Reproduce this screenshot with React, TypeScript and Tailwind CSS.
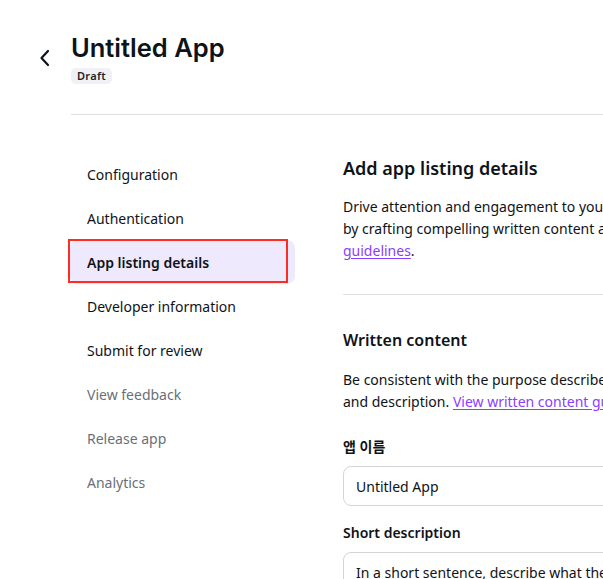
import React from "react";

const navItems: { label: string; state: "normal" | "active" | "muted" }[] = [
  { label: "Configuration", state: "normal" },
  { label: "Authentication", state: "normal" },
  { label: "App listing details", state: "active" },
  { label: "Developer information", state: "normal" },
  { label: "Submit for review", state: "normal" },
  { label: "View feedback", state: "muted" },
  { label: "Release app", state: "muted" },
  { label: "Analytics", state: "muted" },
];

export default function App() {
  return (
    <div
      className="w-[603px] h-[579px] overflow-hidden bg-white text-[#0e1318]"
      style={{ fontFamily: '"Noto Sans", "Noto Sans CJK KR", sans-serif' }}
    >
      {/* Header */}
      <div className="flex pl-[38px] pt-[32px]">
        <div className="w-[33px] pt-[17px]">
          <svg width="16" height="18" viewBox="0 0 16 18" fill="none">
            <path d="M10 2 L3.5 9 L10 16" stroke="#0e1318" strokeWidth="2.2" strokeLinecap="round" strokeLinejoin="round" />
          </svg>
        </div>
        <div className="flex flex-col items-start">
          <h1 className="text-[24px] leading-[32px] font-semibold" style={{ fontFamily: 'Inter, "Noto Sans", sans-serif', fontSize: "25.5px" }}>
            Untitled App
          </h1>
          <span className="mt-[4px] rounded-[5px] bg-[#f0f1f4] px-[6px] text-[11px] leading-[16px] font-semibold tracking-[0.3px] text-[#1f2328]">
            Draft
          </span>
        </div>
      </div>
      <div className="ml-[71px] mt-[30px] border-t border-[#dedfe3] w-[700px]" />

      {/* Body */}
      <div className="flex pl-[70px] pt-[37px]">
        <nav className="w-[225px] shrink-0 flex flex-col">
          {navItems.map((item) => (
            <div
              key={item.label}
              className={
                item.state === "active"
                  ? "relative h-[44px] flex items-center px-[17px] rounded-[8px] bg-[#eee9fd] text-[14px] font-semibold text-[#0e1318]"
                  : item.state === "muted"
                  ? "h-[44px] flex items-center px-[17px] text-[14px] text-[#6a6f77]"
                  : "h-[44px] flex items-center px-[17px] text-[14px] text-[#0e1318]"
              }
            >
              {item.label}
              {item.state === "active" && (
                <div className="absolute left-[-2px] top-[-1px] w-[220px] h-[44px] border-2 border-[#ff2d20]" />
              )}
            </div>
          ))}
        </nav>

        <main className="ml-[48px] w-[520px] shrink-0 pt-[2px]">
          <h2 className="text-[18px] leading-[28px] font-semibold">Add app listing details</h2>
          <p className="mt-[14px] text-[14px] leading-[22px] whitespace-nowrap text-[#0e1318]">
            Drive attention and engagement to your app in the marketplace
            <br />
            by crafting compelling written content and visuals. Follow our
            <br />
            <a className="text-[#8b3dff] underline underline-offset-2">guidelines</a>.
          </p>
          <div className="mt-[32px] border-t border-[#dedfe3]" />
          <h3 className="mt-[33px] text-[16px] leading-[24px] font-semibold">Written content</h3>
          <p className="mt-[17px] text-[14px] leading-[22px] whitespace-nowrap">
            Be consistent with the purpose described in your app name
            <br />
            and description.{" "}
            <a className="text-[#8b3dff] underline underline-offset-2">View written content guidelines</a>
          </p>
          <label className="block mt-[24px] text-[14px] leading-[20px] font-semibold">앱 이름</label>
          <div className="mt-[9px] h-[40px] rounded-[8px] border border-[#d3d5d9] flex items-center px-[12px] text-[14px]">
            Untitled App
          </div>
          <label className="block mt-[17px] text-[14px] leading-[20px] font-semibold">Short description</label>
          <div className="mt-[9px] h-[80px] rounded-[8px] border border-[#d3d5d9] px-[12px] pt-[9px] text-[14px] leading-[22px] text-[#0e1318] whitespace-nowrap">
            In a short sentence, describe what the app does
          </div>
        </main>
      </div>
    </div>
  );
}
